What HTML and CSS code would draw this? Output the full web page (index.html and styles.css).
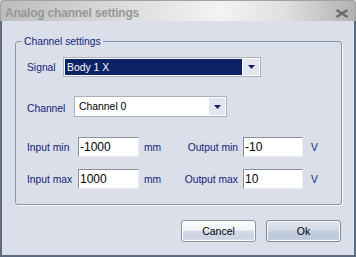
FILE: index.html
```html
<!DOCTYPE html>
<html>
<head>
    <meta charset="UTF-8">
    <title>Analog channel settings</title>
    <link rel="stylesheet" href="styles.css">
</head>
<body>
    <div class="dialog">
        <div class="titlebar">
            <span class="title">Analog channel settings</span>
            <svg class="close" width="14" height="9" viewBox="0 0 14 9">
                <path d="M1.5 1 L12.5 8 M12.5 1 L1.5 8" stroke="#6c6c6c" stroke-width="2.3" fill="none"/>
            </svg>
        </div>
        <div class="body">
            <div class="group">
                <div class="group-title">Channel settings</div>

                <div class="row signal-row">
                    <span class="lbl lbl-signal">Signal</span>
                    <div class="combo combo-signal">
                        <div class="combo-value">Body 1 X</div>
                        <div class="combo-arrow">
                            <svg width="7" height="4" viewBox="0 0 7 4"><polygon points="0,0 7,0 3.5,4" fill="#0b2365"/></svg>
                        </div>
                    </div>
                </div>

                <div class="row channel-row">
                    <span class="lbl lbl-channel">Channel</span>
                    <div class="combo combo-channel">
                        <div class="combo-value">Channel 0</div>
                        <div class="combo-arrow">
                            <svg width="7" height="4" viewBox="0 0 7 4"><polygon points="0,0 7,0 3.5,4" fill="#0b2365"/></svg>
                        </div>
                    </div>
                </div>

                <div class="ranges">
                    <span class="lbl">Input min</span>
                    <input class="field" type="text" value="-1000">
                    <span class="lbl unit">mm</span>
                    <span class="lbl out-lbl">Output min</span>
                    <input class="field field-out" type="text" value="-10">
                    <span class="lbl unit-v">V</span>

                    <span class="lbl">Input max</span>
                    <input class="field" type="text" value="1000">
                    <span class="lbl unit">mm</span>
                    <span class="lbl out-lbl">Output max</span>
                    <input class="field field-out" type="text" value="10">
                    <span class="lbl unit-v">V</span>
                </div>
            </div>

            <div class="actions">
                <button class="btn">Cancel</button>
                <button class="btn btn-default">Ok</button>
            </div>
        </div>
    </div>
</body>
</html>
```

FILE: styles.css
```css
body {
    margin: 0;
    background-color: #dadfe9;
    font-family: "Liberation Sans", Arial, sans-serif;
}
.dialog {
    width: 356px;
    height: 257px;
    display: flex;
    flex-direction: column;
}
.titlebar {
    height: 21px;
    box-sizing: border-box;
    border: 1px solid #a2a2a2;
    border-bottom: none;
    border-radius: 4px 4px 0 0;
    background: linear-gradient(to right, #bcbcbc 0%, #d8d8d8 30%, #f3f3f3 62%, #e0e0e0 80%, #b1b1b1 100%);
    display: flex;
    align-items: flex-start;
    justify-content: space-between;
    padding: 5px 6px 0 4px;
}
.title {
    font-weight: bold;
    font-size: 12px;
    line-height: 14px;
    letter-spacing: -0.2px;
    color: #979797;
}
.close {
    margin-top: 3px;
}
.body {
    flex: 1;
    border: 2px solid #5d6b81;
    border-top: none;
    background-color: #dadfe9;
    display: flex;
    flex-direction: column;
}
.group {
    margin: 20px 12px 0 13px;
    border: 1px solid #8a96a6;
    border-radius: 3px;
    box-shadow: 1px 1px 0 #f6f8fb;
    padding: 0 11px 15px 11px;
}
.group-title {
    width: fit-content;
    margin: -7px 0 0 -5px;
    padding: 0 2px;
    background-color: #dadfe9;
    font-size: 10.3px;
    line-height: 13px;
    color: #16287c;
}
.lbl {
    font-size: 10.3px;
    color: #13247a;
    white-space: nowrap;
}
.row {
    display: flex;
    align-items: center;
}
.signal-row {
    margin-top: 9px;
}
.channel-row {
    margin-top: 19px;
}
.lbl-signal {
    width: 36px;
}
.lbl-channel {
    width: 47px;
    padding-top: 3px;
}
.combo {
    display: flex;
    box-sizing: border-box;
    border: 1px solid #a9b1bf;
    padding: 1px;
    background-color: #fff;
}
.combo-signal {
    width: 198px;
    height: 20px;
}
.combo-channel {
    width: 153px;
    height: 21px;
}
.combo-value {
    flex: 1;
    display: flex;
    align-items: center;
    font-size: 10.4px;
    padding-left: 3px;
    color: #000;
}
.combo-signal .combo-value {
    background-color: #0b2365;
    color: #fff;
    padding-left: 2px;
}
.combo-arrow {
    width: 16px;
    margin-left: 1px;
    background-color: #e3e6ef;
    display: flex;
    align-items: center;
    justify-content: center;
}
.ranges {
    display: grid;
    grid-template-columns: 51px 61px 41px 63px 60px auto;
    grid-auto-rows: 20px;
    row-gap: 12px;
    align-items: center;
    margin-top: 20px;
}
.field {
    box-sizing: border-box;
    height: 20px;
    width: 61px;
    margin: 0;
    padding: 0 0 0 1px;
    border: 1px solid;
    border-color: #8a8f99 #e8ebf1 #e8ebf1 #8a8f99;
    background-color: #fff;
    font-family: "Liberation Sans", Arial, sans-serif;
    font-size: 12px;
    color: #000;
    outline: none;
}
.field-out {
    width: 60px;
}
.unit {
    padding-left: 5px;
}
.out-lbl {
    text-align: right;
    padding-right: 5px;
}
.unit-v {
    padding-left: 8px;
}
.actions {
    display: flex;
    justify-content: flex-end;
    gap: 10px;
    margin-top: 15px;
    padding-right: 13px;
}
.btn {
    width: 75px;
    height: 22px;
    margin: 0;
    padding: 0;
    border: 1px solid #8c95a4;
    border-radius: 3px;
    background: linear-gradient(#fdfdfe 0%, #f0f2f7 45%, #d5dbe6 52%, #ccd3e1 85%, #dde2eb 100%);
    box-shadow: inset 0 0 0 1px #ffffff;
    font-family: "Liberation Sans", Arial, sans-serif;
    font-size: 10.5px;
    color: #000;
}
.btn-default {
    border-color: #7d879a;
    background: linear-gradient(#dfe5ef 0%, #d5dce9 45%, #c4cee0 52%, #bdc8db 85%, #cbd4e3 100%);
}
```
